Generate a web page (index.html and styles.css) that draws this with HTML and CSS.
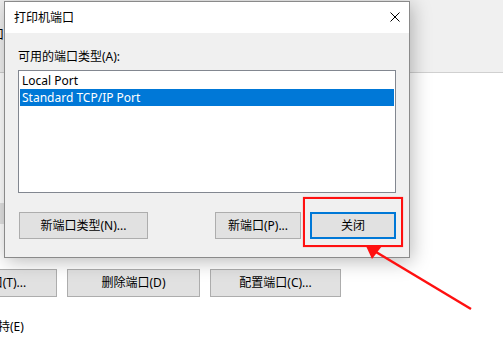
FILE: index.html
```html
<!DOCTYPE html>
<html>
<head>
<meta charset="utf-8">
<link rel="stylesheet" href="styles.css">
</head>
<body>
<div class="desk">
  <div class="bgwin">
    <div class="bg-top"><span class="bg-tab">端口</span></div>
    <div class="bg-strip"></div>
    <div class="bg-btns">
      <div class="btn bg-btn w133">添加端口(T)...</div>
      <div class="btn bg-btn w133">删除端口(D)</div>
      <div class="btn bg-btn w131">配置端口(C)...</div>
    </div>
    <div class="bg-check">启用双向支持(E)</div>
  </div>

  <div class="dialog">
    <div class="titlebar">
      <span class="title">打印机端口</span>
      <svg class="close" width="10" height="10" viewBox="0 0 10 10"><path d="M0.5 0.5 L9.5 9.5 M9.5 0.5 L0.5 9.5" stroke="#000" stroke-width="1" fill="none"/></svg>
    </div>
    <div class="body">
      <div class="label">可用的端口类型(A):</div>
      <div class="listbox">
        <div class="row">Local Port</div>
        <div class="row selected">Standard TCP/IP Port</div>
      </div>
      <div class="actions">
        <div class="btn w129">新端口类型(N)...</div>
        <div class="btn w86 push">新端口(P)...</div>
        <div class="btn w86 primary">关闭</div>
      </div>
    </div>
  </div>

  <div class="highlight"></div>
  <svg class="arrow" width="503" height="343" viewBox="0 0 503 343">
    <line x1="376" y1="252" x2="471" y2="309" stroke="#ff1010" stroke-width="2.5"/>
    <polygon points="366,246 382,246 372,259" fill="#ff1010"/>
  </svg>
</div>
</body>
</html>
```
FILE: styles.css
```css
html, body {
  margin: 0;
  padding: 0;
}
body {
  width: 503px;
  height: 343px;
  overflow: hidden;
  background: #ffffff;
  font-family: "Noto Sans", "Noto Sans CJK SC", sans-serif;
  font-size: 12px;
  color: #000;
}
.desk {
  position: relative;
  width: 503px;
  height: 343px;
  overflow: hidden;
}

/* background window */
.bgwin {
  display: flex;
  flex-direction: column;
}
.bg-top {
  height: 72px;
  background: #f0f0f0;
  border-bottom: 1px solid #d0d0d0;
  position: relative;
}
.bg-tab {
  display: block;
  margin-left: -20px;
  margin-top: 27px;
  line-height: 16px;
}
.bg-strip {
  margin-top: 130px;
  width: 5px;
  height: 21px;
  background: #e3e3e3;
}
.bg-btns {
  display: flex;
  gap: 10px;
  margin-top: 45px;
  margin-left: -76px;
}
.btn {
  box-sizing: border-box;
  height: 27px;
  background: #e1e1e1;
  border: 1px solid #adadad;
  display: flex;
  align-items: center;
  justify-content: center;
  white-space: nowrap;
  line-height: 16px;
}
.bg-btn { height: 28px; }
.w133 { width: 133px; flex: none; }
.w131 { width: 131px; flex: none; }
.w129 { width: 129px; flex: none; }
.w86 { width: 86px; flex: none; }
.bg-check {
  margin-top: 21px;
  margin-left: -62px;
  line-height: 18px;
  white-space: nowrap;
}

/* dialog */
.dialog {
  position: absolute;
  left: 4px;
  top: 1px;
  width: 406px;
  height: 257px;
  box-sizing: border-box;
  border: 1px solid #8a8a8a;
  background: #f0f0f0;
  box-shadow: 2px 3px 18px rgba(0, 0, 0, 0.28);
  display: flex;
  flex-direction: column;
}
.titlebar {
  height: 31px;
  background: #ffffff;
  display: flex;
  align-items: center;
  padding: 0 9px;
  flex: none;
}
.title {
  flex: 1;
  line-height: 16px;
  padding-top: 1px;
}
.close {
  display: block;
  margin-top: -1px;
}
.body {
  padding: 0 13px;
  display: flex;
  flex-direction: column;
}
.label {
  margin-top: 16px;
  line-height: 16px;
  height: 16px;
}
.listbox {
  margin-top: 5px;
  box-sizing: border-box;
  height: 123px;
  background: #fff;
  border: 1px solid #828790;
  padding: 1px;
}
.row {
  height: 17px;
  line-height: 17px;
  padding-left: 2px;
  white-space: nowrap;
}
.row.selected {
  background: #0078d7;
  color: #fff;
}
.actions {
  margin-top: 19px;
  display: flex;
  gap: 9px;
  padding-left: 1px;
}
.push { margin-left: auto; }
.primary {
  border: 2px solid #0078d7;
}

.highlight {
  position: absolute;
  left: 303px;
  top: 197px;
  width: 100px;
  height: 50px;
  box-sizing: border-box;
  border: 2px solid #ff1010;
  box-shadow: 0 0 1px rgba(255, 0, 0, 0.5);
}
.arrow {
  position: absolute;
  left: 0;
  top: 0;
}
```
